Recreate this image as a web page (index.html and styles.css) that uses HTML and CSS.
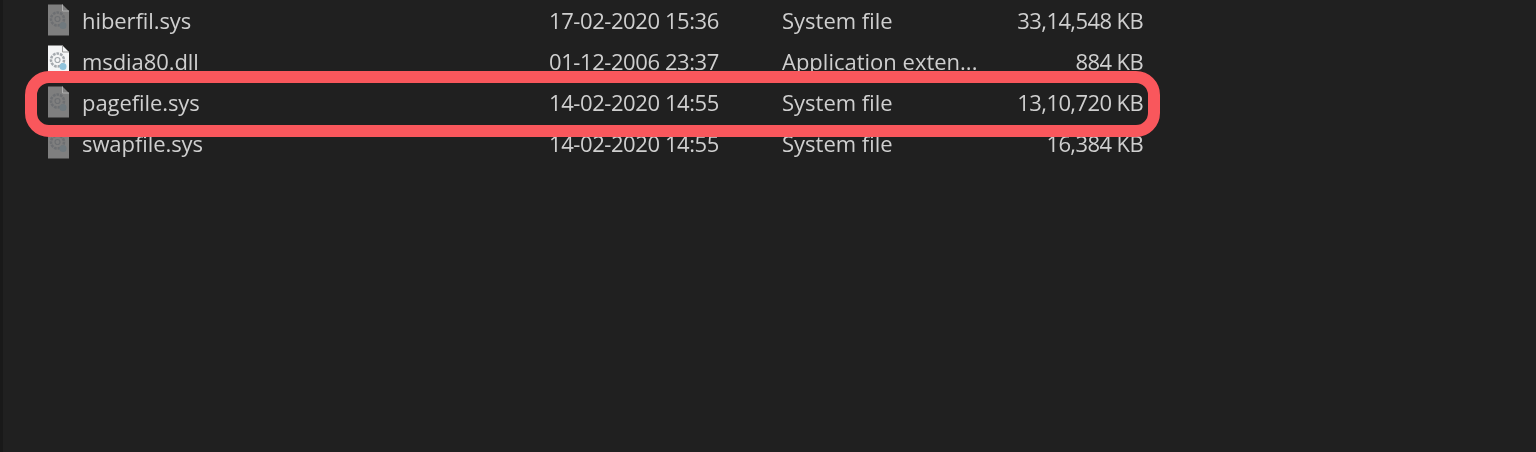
FILE: index.html
```
<!DOCTYPE html>
<html lang="en">
  <head>
    <title>File list</title>
    <link rel="stylesheet" href="styles.css">
  </head>
  <body>
    <svg class="defs" width="0" height="0">
      <symbol id="sysfile" viewBox="0 0 22 32">
        <path d="M0.5 0.5H15L21.5 7V31.5H0.5Z" fill="#7f7f7f"/>
        <path d="M15 0.5V7H21.5" fill="none" stroke="#b0b0b0"/>
        <circle cx="10" cy="15" r="6.5" fill="none" stroke="#6d6f72" stroke-width="2.5" stroke-dasharray="2.6 1"/>
        <circle cx="10" cy="15" r="2.5" fill="none" stroke="#6d6f72" stroke-width="1.2"/>
        <circle cx="15.5" cy="21.5" r="3.5" fill="#70797e"/>
      </symbol>
      <symbol id="dllfile" viewBox="0 0 22 32">
        <path d="M0.5 0.5H15L21.5 7V31.5H0.5Z" fill="#f4f5f6"/>
        <path d="M15 0.5V7H21.5" fill="none" stroke="#9a9a9a"/>
        <circle cx="10" cy="15" r="6.5" fill="none" stroke="#a4a9ae" stroke-width="2.5" stroke-dasharray="2.6 1"/>
        <circle cx="10" cy="15" r="2.5" fill="none" stroke="#a4a9ae" stroke-width="1.2"/>
        <circle cx="15.5" cy="21.5" r="3.5" fill="#8fc3dc"/>
      </symbol>
    </svg>
    <div class="explorer">
      <div class="file_list">
        <div class="row">
          <svg class="ico"><use href="#sysfile"/></svg>
          <span class="name">hiberfil.sys</span>
          <span class="date">17-02-2020 15:36</span>
          <span class="type">System file</span>
          <span class="size">33,14,548 KB</span>
        </div>
        <div class="row">
          <svg class="ico"><use href="#dllfile"/></svg>
          <span class="name">msdia80.dll</span>
          <span class="date">01-12-2006 23:37</span>
          <span class="type">Application exten...</span>
          <span class="size">884 KB</span>
        </div>
        <div class="row">
          <svg class="ico"><use href="#sysfile"/></svg>
          <span class="name">pagefile.sys</span>
          <span class="date">14-02-2020 14:55</span>
          <span class="type">System file</span>
          <span class="size">13,10,720 KB</span>
        </div>
        <div class="row">
          <svg class="ico"><use href="#sysfile"/></svg>
          <span class="name">swapfile.sys</span>
          <span class="date">14-02-2020 14:55</span>
          <span class="type">System file</span>
          <span class="size">16,384 KB</span>
        </div>
        <div class="mark"></div>
      </div>
    </div>
  </body>
</html>
```
FILE: styles.css
```
* {
  margin: 0;
  padding: 0;
  box-sizing: border-box;
}
html,
body {
  height: 100%;
  overflow: hidden;
}
body {
  background-color: #202020;
  font-family: "Open Sans", "Liberation Sans", sans-serif;
  font-size: 22px;
  color: #cfcfcf;
}
.defs {
  position: absolute;
}
.explorer {
  /* dark strip on the left edge */
  height: 100%;
  border-left: 3px solid #191919;
}
.file_list {
  position: relative;
  width: 1157px;
}
.row {
  /* icon, name, date, type, size */
  display: grid;
  grid-template-columns: 79px 467px 233px 1fr auto;
  align-items: center;
  height: 41px;
  padding-bottom: 2px;
  filter: blur(0.4px); /* the screenshot is soft */
}
.ico {
  width: 23px;
  height: 32px;
  margin-left: 44px;
}
.name,
.date,
.type,
.size {
  white-space: nowrap;
}
.name {
  letter-spacing: -0.08px;
}
.date {
  letter-spacing: -0.42px;
}
.size {
  padding-right: 17px;
  letter-spacing: -0.6px;
  text-align: right;
}
.mark {
  /* red box around pagefile.sys */
  position: absolute;
  top: 71px;
  left: 22px;
  width: 1135px;
  height: 66px;
  border: 12px solid #f9575c;
  border-radius: 24px;
}
```
